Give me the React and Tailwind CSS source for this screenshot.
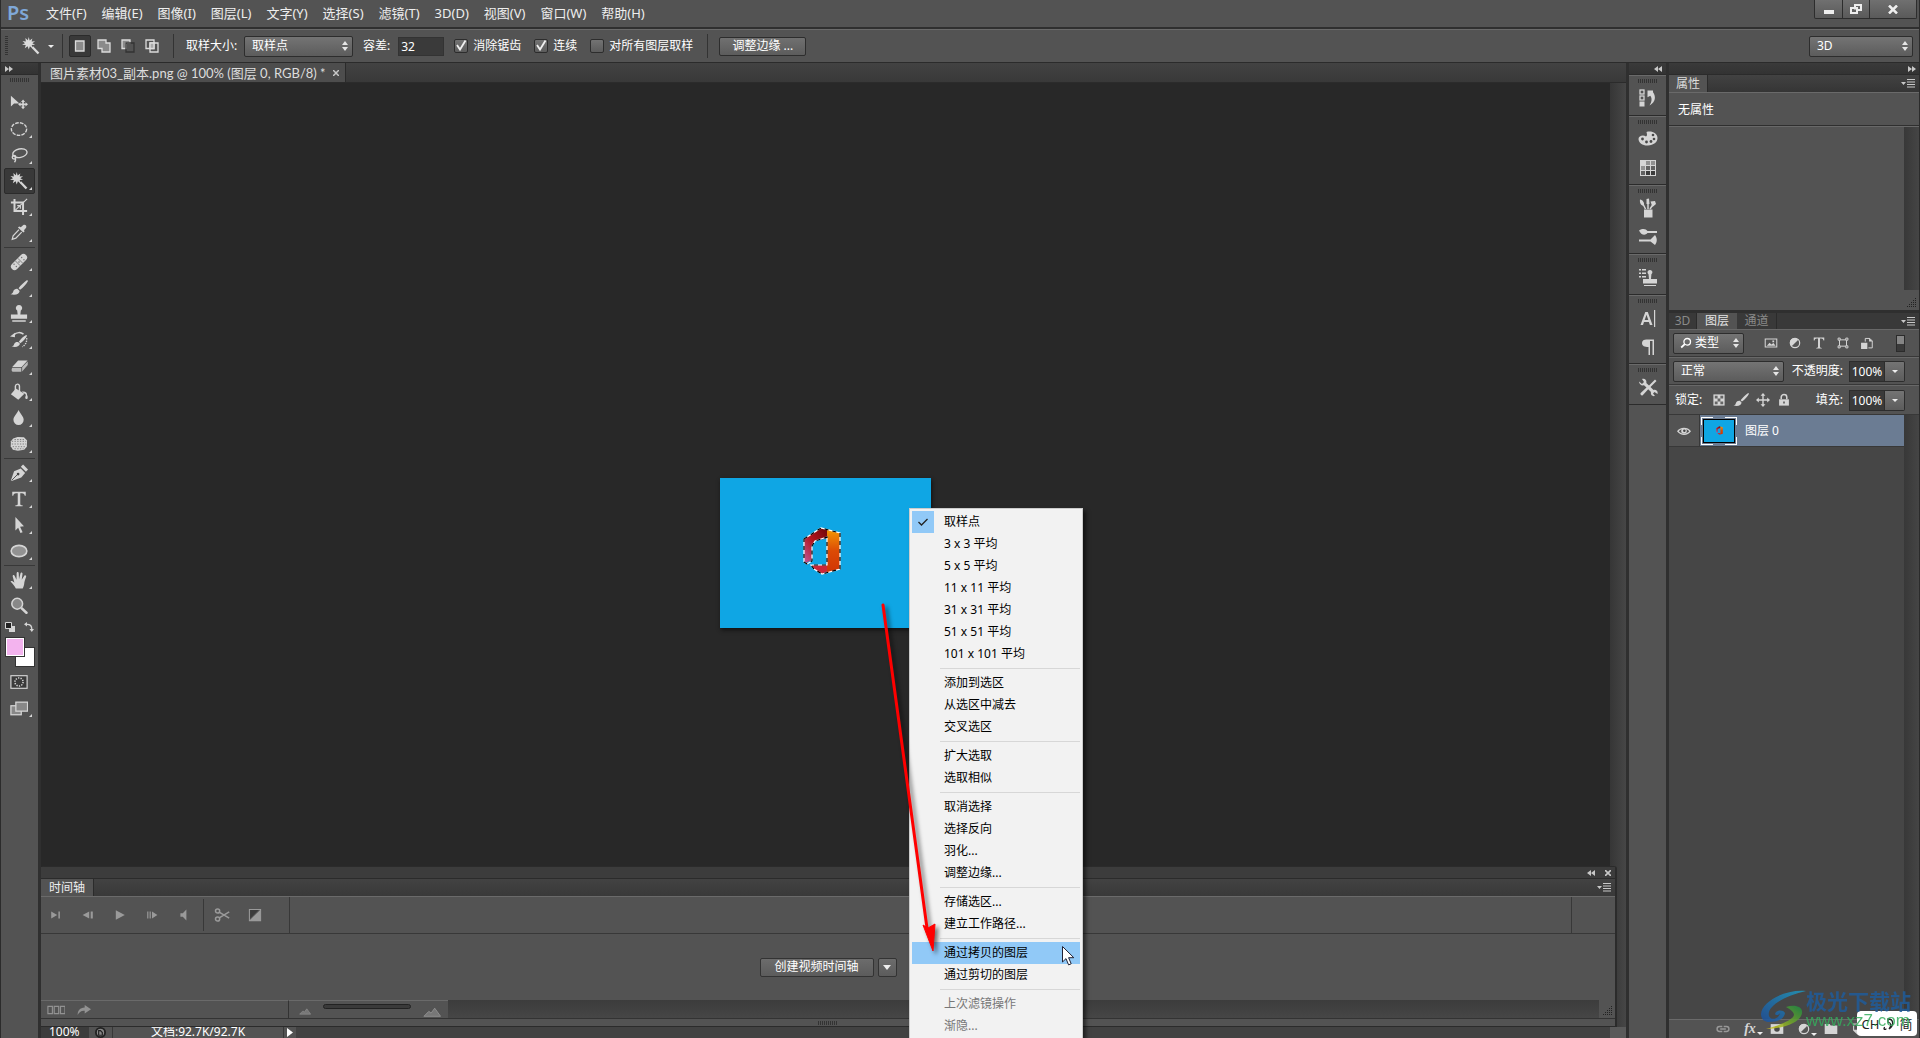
import clsx from "clsx";

const menus = ["文件(F)", "编辑(E)", "图像(I)", "图层(L)", "文字(Y)", "选择(S)", "滤镜(T)", "3D(D)", "视图(V)", "窗口(W)", "帮助(H)"];

const contextMenu = [
  [{ label: "取样点", checked: true }, { label: "3 x 3 平均" }, { label: "5 x 5 平均" }, { label: "11 x 11 平均" }, { label: "31 x 31 平均" }, { label: "51 x 51 平均" }, { label: "101 x 101 平均" }],
  [{ label: "添加到选区" }, { label: "从选区中减去" }, { label: "交叉选区" }],
  [{ label: "扩大选取" }, { label: "选取相似" }],
  [{ label: "取消选择" }, { label: "选择反向" }, { label: "羽化..." }, { label: "调整边缘..." }],
  [{ label: "存储选区..." }, { label: "建立工作路径..." }],
  [{ label: "通过拷贝的图层", active: true }, { label: "通过剪切的图层" }],
  [{ label: "上次滤镜操作", disabled: true }, { label: "渐隐...", disabled: true }],
];

// All 20x20 drawings, filled with the current text colour
const icons = {
  move: (
    <>
      <path d="M1 2v12l3.500-3.500h6z" />
      <path d="M14.500 6l2.300 2.800h-1.400V10.600h1.900V9.200L20 11.500l-2.700 2.300v-1.400h-1.900v1.900h1.400L14.500 17l-2.300-2.700h1.400v-1.900h-1.900v1.400L9 11.500l2.700-2.300v1.400h1.900V8.800h-1.400z" />
    </>
  ),
  ellipseMarquee: <ellipse cx="10" cy="10" rx="8.500" ry="7" fill="none" stroke="currentColor" strokeWidth="1.500" strokeDasharray="4 1.300" />,
  lasso: (
    <g fill="none" stroke="currentColor" strokeWidth="1.500">
      <ellipse cx="11" cy="8" rx="8" ry="4.800" transform="rotate(-12 11 8)" />
      <circle cx="4.500" cy="12.500" r="2" />
      <path d="M5.500 14c1 1 .8 2.500-.5 4" />
    </g>
  ),
  wand: (
    <>
      <path d="M7.500 0l1 4 3-2.300-.8 3.400 3.800-.3-3 2.200 3 1.700-3.700.3 1 3.700-3-2.300-1.300 3.600-1.200-3.600-3.200 2 1.100-3.500L0 8.600 3.300 7 .5 4.500l3.800.5L3.700 1l2.800 2.500z" />
      <path d="M10.500 12l1.800-1.700 7 7.200-1.900 1.700z" />
    </>
  ),
  crop: (
    <g fill="none" stroke="currentColor">
      <path d="M5 1v13.500h14M1 5h13.500v14" strokeWidth="2.200" />
      <path d="M6 13.500L19 1M8 8.500h3.500V12" strokeWidth="1.300" />
    </g>
  ),
  eyedropper: (
    <>
      <path d="M12 3.500l2.500-2.200c2.500-1.300 4.500.7 3.400 3L15.500 7l.8 1-1.500 1.500-6-5.500L10.200 2.800z" />
      <path d="M10 6.200L3.500 13 2.500 17l4-1.200L13 9" fill="none" stroke="currentColor" strokeWidth="1.400" />
    </>
  ),
  bandage: (
    <>
      <rect x="-1" y="6" width="22" height="8" rx="4" transform="rotate(-45 10 10)" />
      <path d="M5.800 8.600l5.600 5.600M8.600 5.800l5.600 5.600" stroke="#777" strokeWidth="1" />
      <g fill="#666">
        <circle cx="4.500" cy="12.500" r=".7" /><circle cx="7" cy="15" r=".7" /><circle cx="10" cy="10" r=".8" />
        <circle cx="13" cy="5" r=".7" /><circle cx="15.500" cy="7.500" r=".7" />
      </g>
    </>
  ),
  brush: <path d="M19 1.200l1 .9c-2 3.700-5.300 7.400-8.800 9.800L9.500 10.300C12.300 6.800 15.700 3.500 19 1.200zM8.500 11l2.200 2.200c-.3 3.300-4.200 5.200-10.200 3.700 2.200-.4 2.700-1.500 3.300-3.500.7-1.800 2.800-2.900 4.700-2.400z" />,
  stamp: <path d="M10 0a3.400 3.400 0 0 1 2 6.200L11.500 10.500H19v4.800H1v-4.800h7.500L8 6.200A3.400 3.400 0 0 1 10 0zM2.500 17h15v1.700h-15z" />,
  historyBrush: (
    <>
      <path d="M18 4.500l1 .9c-1.900 3.300-4.600 6.300-7.500 8.100l-1.700-1.600c2.200-3.100 5-5.800 8.200-7.400zM9 12.300l2.100 2c-.8 3-4.300 4.400-9.500 3 2-.4 2.400-1.400 3.100-2.900.8-1.900 2.600-2.500 4.300-2.100z" />
      <path d="M4 4.500C7.500 1 12 1.200 15 3.500" fill="none" stroke="currentColor" strokeWidth="1.700" />
      <path d="M18.500 8c.5 4-1.500 8-5 9.500" fill="none" stroke="currentColor" strokeWidth="1.500" strokeDasharray="1.500 1.200" />
      <path d="M0 6l5.500-4V7z" />
    </>
  ),
  eraser: (
    <>
      <path d="M9 4h10.500L13 11H2.500z" />
      <path d="M2.500 12h10v4.500H3c-1.300-.5-1.700-2.500-.5-4.500zM13.500 11.500L19.700 5v4L13.500 16z" opacity=".8" />
    </>
  ),
  bucket: (
    <>
      <path d="M6.500 6L16 12l-6.800 6.500L1 12.500z" />
      <path d="M6 9V3.500c.5-3 4.200-3 4.500 0v6" fill="none" stroke="currentColor" strokeWidth="1.600" />
      <path d="M13 9.500c4.500-.5 6 1 6 3.700.7 1.500.9 2.700.5 4-1 1-2.300.5-2.600-.5 0-1.500.4-2.500.8-3.500-.7-1.200-2.200-1.700-4.700-3.700z" />
    </>
  ),
  drop: <path d="M9.500 1c1.700 4 5.700 7 5.700 11a5.700 5.700 0 0 1-11.400 0C3.800 8 8 5 9.500 1z" />,
  sponge: (
    <>
      <path d="M3.500 4l5-1.700 7 .2L19 6l-.3 7-3 3.500-7 1-5.500-1.200L.8 12.500 1 7z" />
      <path d="M2 7h16M2 10h16M3 13h15M5 5h11M5 15.300h10" stroke="#777" strokeDasharray="1.500 1.500" />
    </>
  ),
  pen: (
    <>
      <path d="M12 5l3.500 3.500 1.300 1.500-4.300 5L1.800 19 1 18.200 4.500 8z" />
      <path d="M12 3l2.500-2.500L20 6l-2.300 2.700z" />
      <path d="M1.800 18.200L8 12" stroke="#444" />
      <circle cx="9" cy="11.200" r="1.500" fill="#444" />
    </>
  ),
  type: <path d="M2.500 2h15v4.500h-1.100c-.4-2-1-3-3.200-3h-1.800V15.500c0 1.100.5 1.300 2.600 1.500v1H6V17c2.100-.2 2.600-.4 2.600-1.500v-12H6.800c-2.200 0-2.800 1-3.200 3H2.500z" />,
  arrow: <path d="M6 1l9.500 10.500-4.300.5 2.800 6-2.400 1-2.500-6L6 16z" />,
  ellipse: <ellipse cx="10" cy="10" rx="8.700" ry="6.300" fill="#929292" stroke="currentColor" strokeWidth="1.800" />,
  hand: <path d="M6.500 19.500c-1.500-3-3.700-5.300-6-7.700.9-1.500 2.600-.7 4.400 1.200L3 6c-.2-1.700 1.700-2 2.200-.5l2 4.300L7.400 2.500c.1-1.700 2.200-1.700 2.300 0L10 9.200l1.700-6.700c.5-1.500 2.500-.8 2.200.7L13 9.800l2.900-4.600c.9-1.300 2.600-.2 2 1.200-1.100 3-1.900 5.400-2.200 8.200-.3 2.200-1.100 3.300-1.600 4.900z" />,
  zoom: (
    <>
      <circle cx="8" cy="7.500" r="6" fill="#888" stroke="currentColor" strokeWidth="1.700" />
      <path d="M11.500 13l2-2 6 5.700c.9 1.300-1 3-2.200 2z" />
    </>
  ),
  quickMask: (
    <>
      <rect x="1" y="3" width="18" height="14" fill="#3a3a3a" stroke="currentColor" strokeWidth="1.300" />
      <circle cx="10" cy="10" r="4.500" fill="none" stroke="currentColor" strokeWidth="1.700" strokeDasharray="1.400 1.400" />
    </>
  ),
  screenMode: (
    <g fill="#888" stroke="currentColor" strokeWidth="1.400">
      <rect x="1" y="7.500" width="11.500" height="10" />
      <rect x="6.500" y="3.500" width="13" height="10" />
    </g>
  ),
  historyPanel: (
    <>
      <g fill="none" stroke="currentColor" strokeWidth="1.300"><rect x="2" y="2" width="4" height="4" /><rect x="2" y="8" width="4" height="4" /></g>
      <rect x="1.500" y="13.500" width="5" height="5" />
      <path d="M9.500 2.500h5.500v1.700c3 4 3 9.500-3.500 13.300 2.500-4 2.700-7.500.8-9.800L9.500 9.300z" />
    </>
  ),
  palette: (
    <>
      <path d="M8.500 3c5-1.500 11 1 11 6 0 4.500-4 7-9.500 7.500-5 .3-9.500-2.500-9.500-6.500C.5 7 5 5.500 8 7.500 9.500 7 9 5 8.500 3z" />
      <g fill="#484848"><circle cx="4.500" cy="10" r="1.400" /><circle cx="8.500" cy="13" r="1.400" /><circle cx="13" cy="12.500" r="1.400" /><circle cx="16" cy="10" r="1.300" /><circle cx="15" cy="6" r="1.300" /></g>
    </>
  ),
  swatches: (
    <>
      <rect x="2" y="2" width="16" height="16" />
      <g fill="#919191"><rect x="8" y="3" width="4" height="4" /><rect x="13" y="3" width="4" height="4" /><rect x="3" y="8" width="4" height="4" /></g>
      <g fill="#616161"><rect x="8" y="8" width="4" height="4" /><rect x="13" y="8" width="4" height="4" /><rect x="3" y="13" width="4" height="4" /></g>
      <g fill="#3c3c3c"><rect x="8" y="13" width="4" height="4" /><rect x="13" y="13" width="4" height="4" /></g>
    </>
  ),
  brushPresets: (
    <>
      <path d="M6 11.500h8.500v8H6z" />
      <path d="M7.500 11L4 4M10 11V4M12 11l4-6" stroke="currentColor" strokeWidth="1.500" />
      <path d="M2 1.500c3 .5 4.500 3 4 6.500C3 7.500 1.500 5 2 1.500zM8.500 1L11 .5 11.500 6h-3zM12.500 3.500l4.500-.5 1 3-3.500 3z" />
    </>
  ),
  brushPanel: (
    <>
      <path d="M1 3.500c4-2.500 7-1.500 8.500.5H19v2H9.500C7 9 3 8 1 3.500z" />
      <path d="M1 12.500h11.500l4.500-4.500c2.300 3 2.500 7 0 10l-4.500-3.500H1z" />
    </>
  ),
  cloneSource: (
    <>
      <path d="M1 2h2v1.500H1zM4 2h4v1.500H4zM1 5.500h2V7H1zM4 5.500h4V7H4zM1 9h2v1.500H1zM4 9h4v1.500H4z" />
      <path d="M12 3a2.300 2.300 0 0 1 1.400 4.200L13 12h6v4.500H5V12h6l-.5-4.800A2.300 2.300 0 0 1 12 3zM6 18h12v1H6z" />
    </>
  ),
  character: <path d="M2.500 17L7.300 4h2.500l4.700 13h-2.600l-1-3H6l-1 3zm4.200-5h3.600L8.500 6.700zM16 2h1.200v17H16z" />,
  paragraph: <path d="M4 6c0-2.500 2-3.500 4.500-3.500H16V18h-1.500V4H12v14h-1.500v-8C6.500 10 4 9 4 6z" />,
  toolPresets: (
    <path d="M1 4.500l3 2.500 2-2L4 2c3-1 5 1.200 4.300 4L11 8.500l6-6 1.500 1.500-6 6 3 3c3-.7 4.700 1.500 4 4l-3-2-1.500 1.500L17 19c-3 .8-4.700-1.500-4-4l-2.800-2.800-5.500 6c-1.500.8-3-1-2-2.300L8.500 10.500 6 8.300C3.500 9 1 7 1 4.500z" />
  ),
  picture: (
    <>
      <path d="M1 3.500h18v13H1zM2.500 5v10h15V5z" fillRule="evenodd" />
      <path d="M4 14l4-4.500 2.500 2.500 3-2 3 4zM12 6.500h2.500V9H12z" />
    </>
  ),
  halfCircle: (
    <>
      <circle cx="10" cy="10" r="6.700" fill="#555" stroke="currentColor" strokeWidth="1.700" />
      <path d="M14.700 5.300A6.700 6.700 0 1 0 5.300 14.700z" />
    </>
  ),
  shape: (
    <g fill="none" stroke="currentColor" strokeWidth="1.400">
      <path d="M5 5.500h10v9H5z" />
      <path d="M3 3h3v3H3zM14 3h3v3h-3zM3 14h3v3H3zM14 14h3v3h-3z" fill="#555" />
    </g>
  ),
  smartObject: (
    <>
      <path d="M7.500 8V3.500h6.500L17.500 7v10H12" fill="none" stroke="currentColor" strokeWidth="1.400" />
      <path d="M13 3v5h5zM1.500 9.500h9v9h-9z" />
    </>
  ),
  checker: (
    <>
      <path d="M2 2h16v16H2z" />
      <path d="M4 4h4v4H4zM12 4h4v4h-4zM8 8h4v4H8zM4 12h4v4H4zM12 12h4v4h-4z" fill="#666" />
    </>
  ),
  fourWay: <path d="M10 0l3.500 4H11v5h5V6.500l4 3.500-4 3.500V11h-5v5h2.500L10 20l-3.500-4H9v-5H4v2.500L0 10l4-3.500V9h5V4H6.500z" />,
  lock: (
    <>
      <path d="M3 9h14v9H3z" />
      <path d="M6 9V6c0-5 8-5 8 0v3" fill="none" stroke="currentColor" strokeWidth="2.200" />
      <path d="M9 12h2v3H9z" fill="#444" />
    </>
  ),
  eye: (
    <>
      <path d="M0 10.500C4 4 15.500 3.500 20 10.500 15.500 17.500 5 17.500 0 10.500zm2.500 0c3.500 4.500 11.500 4.500 15 0-3.500-4.500-11.500-4.500-15 0z" fillRule="evenodd" />
      <circle cx="10" cy="10" r="4" /><circle cx="10.500" cy="9.500" r="1.800" fill="#444" />
    </>
  ),
  search: (
    <g fill="none" stroke="currentColor" strokeWidth="2.200">
      <circle cx="12" cy="8" r="5.500" />
      <path d="M8 12l-6 5.500" strokeWidth="3" />
    </g>
  ),
  toEnd: <path d="M2 4l10 6-10 6zM14 4h2.500v12H14z" />,
  stepBack: <path d="M12 4L1 10l11 6zM14.500 4H18v12h-3.500z" />,
  play: <path d="M3 2l15 8-15 8z" />,
  stepForward: <path d="M2 4h2v12H2zM6 4h2v12H6zM10 4l9 6-9 6z" />,
  speaker: <path d="M4 7h4l6-6v18l-6-6H4z" />,
  scissors: (
    <g fill="none" stroke="currentColor" strokeWidth="1.900">
      <circle cx="4.500" cy="5" r="2.600" /><circle cx="4.500" cy="15" r="2.600" />
      <path d="M6.500 6.500L19 14M6.500 13.500L19 6" />
    </g>
  ),
  transition: (
    <>
      <path d="M2 2h16v16H2z" fill="none" stroke="currentColor" strokeWidth="1.500" />
      <path d="M18 2v16H2z" /><path d="M3 3h12L3 15z" fill="#3c3c3c" />
    </>
  ),
  frames: <path d="M1 6h5v8H1zM8 6h5v8H8zM15 6h5v8h-5z" fill="none" stroke="currentColor" strokeWidth="1.300" />,
  share: <path d="M11 3l9 6-9 6v-4c-5-.5-8 2-10 6C1 11 4 7 11 6.500z" />,
  mountains: <path d="M1 17l5.500-5.500L9 13.500 13 8l6.500 9z" fill="#777" stroke="currentColor" />,
  chain: (
    <g fill="none" stroke="currentColor" strokeWidth="2">
      <path d="M9 6.500H5a3.500 3.500 0 0 0 0 7h4M11 6.500h4a3.500 3.500 0 0 1 0 7h-4M6 10h8" />
    </g>
  ),
  mask: (
    <>
      <path d="M1 3h18v14H1z" /><circle cx="10" cy="10" r="4" fill="#4a4a4a" />
    </>
  ),
  folder: <path d="M1 3h7l1.500 2H19v12H1z" />,
  newLayer: <path d="M3 2h14v16H9l-6-6zM4.500 3.500V11H10v5.500h5.500v-13z" fillRule="evenodd" />,
};

function Icon({ name, className = "size-5" }) {
  return (
    <svg viewBox="0 0 20 20" fill="currentColor" aria-hidden="true" className={clsx("shrink-0", className)}>
      {icons[name]}
    </svg>
  );
}

function DoubleArrow({ left }) {
  return (
    <svg viewBox="0 0 8 6" fill="#c8c8c8" aria-hidden="true" className={clsx("w-2 h-1.5", left && "rotate-180")}>
      <path d="M0 0l4 3-4 3zM4 0l4 3-4 3z" />
    </svg>
  );
}

function PanelMenu() {
  return (
    <button aria-label="面板菜单" className="flex items-center">
      <svg viewBox="0 0 14 9" fill="#c8c8c8" className="w-3.5 h-[9px]">
        <path d="M0 3h5L2.500 6zM6 0h8v1H6zM6 2.500h8v1H6zM6 5h8v1H6zM6 7.500h8v1H6z" />
      </svg>
    </button>
  );
}

function Grip() {
  return <div className="w-5 h-1 bg-[repeating-linear-gradient(90deg,#333_0_1px,#535353_1px_2px)]" />;
}

function ResizeCorner() {
  return (
    <svg viewBox="0 0 10 10" fill="#222" aria-hidden="true" className="size-2.5">
      <path d="M8 0h1v1H8zM6 2h1v1H6zM8 2h1v1H8zM4 4h1v1H4zM6 4h1v1H6zM8 4h1v1H8zM2 6h1v1H2zM4 6h1v1H4zM6 6h1v1H6zM8 6h1v1H8zM0 8h1v1H0zM2 8h1v1H2zM4 8h1v1H4zM6 8h1v1H6zM8 8h1v1H8z" />
    </svg>
  );
}

function Caret({ className }) {
  return <svg viewBox="0 0 6 3" fill="#eee" aria-hidden="true" className={clsx("w-1.5 h-[3px]", className)}><path d="M0 0h6L3 3z" /></svg>;
}

function Select({ label, value, className, icon }) {
  return (
    <div className={clsx("relative flex items-center h-[21px] rounded-[2px] border border-[#2d2d2d] bg-linear-to-b from-[#747474] to-[#5c5c5c] text-white", className)}>
      {icon && <Icon name={icon} className="absolute left-1.5 size-3" />}
      <select aria-label={label} className={clsx("appearance-none w-full h-full outline-none leading-4", icon ? "pl-[21px]" : "pl-[7px]")}>
        <option>{value}</option>
      </select>
      <svg viewBox="0 0 6 10" fill="#e6e6e6" aria-hidden="true" className="absolute right-1 w-1.5 h-2.5 pointer-events-none">
        <path d="M0 4l3-4 3 4zM0 6l3 4 3-4z" />
      </svg>
    </div>
  );
}

function Checkbox({ label, checked }) {
  return (
    <label className="flex items-center gap-[5px]">
      <span className="relative size-3.5">
        <input type="checkbox" defaultChecked={checked} className="appearance-none block size-3.5 rounded-[2px] border border-[#2d2d2d] bg-linear-to-b from-[#737373] to-[#5c5c5c]" />
        {checked && (
          <svg viewBox="0 0 14 14" fill="none" stroke="#f0f0f0" strokeWidth="1.800" className="absolute inset-0 size-3.5 pointer-events-none">
            <path d="M3 6l3 4.500L11.500 1.500" />
          </svg>
        )}
      </span>
      {label}
    </label>
  );
}

function PercentField({ label, id }) {
  return (
    <div className="flex items-center">
      <label htmlFor={id} className="pr-1.5">{label}</label>
      <input id={id} defaultValue="100%" className="w-9 h-[21px] border border-[#2d2d2d] bg-[#3a3a3a] text-center text-white outline-none" />
      <button aria-label={label + "选项"} className="flex items-center justify-center w-5 h-[21px] border border-l-0 border-[#2d2d2d] rounded-r-[2px] bg-linear-to-b from-[#747474] to-[#5c5c5c]">
        <Caret />
      </button>
    </div>
  );
}

function MenuBar() {
  return (
    <header className="flex h-[29px] border-b-2 border-[#2f2f2f]">
      <div className="pl-1.5 w-[45px] text-[20px] leading-[26px] font-semibold text-[#7fa8d8]">Ps</div>
      <nav className="flex gap-[15px] text-[13px] leading-[27px] text-[#eee]">
        {menus.map((m) => (
          <button key={m}>{m}</button>
        ))}
      </nav>
      <div className="ml-auto mr-0.5 flex h-[19px] rounded-b-[2px] border border-t-0 border-[#2d2d2d] divide-x divide-[#2d2d2d] bg-linear-to-b from-[#707070] to-[#5a5a5a] text-[#eee]">
        <button aria-label="最小化" className="w-7 flex justify-center items-center"><span className="mt-1.5 w-2.5 h-1 bg-current" /></button>
        <button aria-label="还原" className="w-[27px] flex justify-center items-center">
          <svg viewBox="0 0 12 10" fill="none" stroke="currentColor" strokeWidth="2" className="w-3 h-2.5"><path d="M5 5.500V1h6v5H8M1 4h6v5H1z" /></svg>
        </button>
        <button aria-label="关闭" className="w-[46px] flex justify-center items-center">
          <svg viewBox="0 0 10 9" fill="none" stroke="currentColor" strokeWidth="2.500" className="w-2.5 h-[9px]"><path d="M1 0.500l8 8M9 .5l-8 8" /></svg>
        </button>
      </div>
    </header>
  );
}

function SelectionMode({ kind }) {
  return (
    <svg viewBox="0 0 14 14" fill="none" stroke="currentColor" strokeWidth="1.300" className="size-3.5">
      {kind === "new" && <path d="M2.500 2h8.500v10H2.500z" fill="#8a8a8a" />}
      {kind === "add" && <path d="M1 1h8v3h4v9H5V9.500H1z" fill="#8a8a8a" />}
      {kind === "subtract" && <><path d="M1 9.500V1h8v3H5v5.500z" fill="#8a8a8a" /><path d="M5 4h8v9H5z" stroke="#333" /></>}
      {kind === "intersect" && <><path d="M1 1h8v8.500H1zM5 4h8v9H5z" /><path d="M5 4h4v5.500H5z" fill="#aaa" /></>}
    </svg>
  );
}

function OptionsBar() {
  return (
    <div className="flex items-center h-[33px] border-t border-[#6a6a6a] px-1 text-white">
      <div className="w-[3px] h-5 bg-[repeating-linear-gradient(#333_0_1px,#535353_1px_2px)]" />
      <button aria-label="魔棒工具" className="flex items-center gap-2 ml-3.5 text-[#dcdcdc]">
        <Icon name="wand" className="size-[18px]" />
        <Caret />
      </button>
      <div className="ml-2 w-px h-6 bg-[#333]" />
      <div className="flex items-center ml-1.5 gap-2.5 text-[#dcdcdc]">
        <button aria-label="新选区" className="flex items-center justify-center -mr-1 size-[22px] rounded-[2px] border border-[#2b2b2b] bg-[#393939]"><SelectionMode kind="new" /></button>
        <button aria-label="添加到选区"><SelectionMode kind="add" /></button>
        <button aria-label="从选区减去"><SelectionMode kind="subtract" /></button>
        <button aria-label="与选区交叉"><SelectionMode kind="intersect" /></button>
      </div>
      <div className="ml-3.5 w-px h-6 bg-[#333]" />
      <span className="w-[70px] pl-3">取样大小:</span>
      <Select label="取样大小" value="取样点" className="w-[109px]" />
      <label htmlFor="tolerance" className="ml-2.5 mr-2">容差:</label>
      <input id="tolerance" defaultValue="32" className="w-[46px] h-[19px] px-0.5 border border-[#333] bg-[#3a3a3a] outline-none" />
      <div className="flex items-center gap-[13px] ml-2.5">
        <Checkbox label="消除锯齿" checked />
        <Checkbox label="连续" checked />
        <Checkbox label="对所有图层取样" />
      </div>
      <div className="ml-3.5 w-px h-6 bg-[#333]" />
      <button className="ml-[11px] w-[87px] h-[19px] rounded-[2px] border border-[#2d2d2d] bg-linear-to-b from-[#707070] to-[#5c5c5c] leading-4">调整边缘 ...</button>
      <Select label="工作区" value="3D" className="ml-auto mr-0.5 w-[104px]" />
    </div>
  );
}

const toolGroups = [
  [["move", "移动"], ["ellipseMarquee", "椭圆选框"], ["lasso", "套索"], ["wand", "魔棒"], ["crop", "裁剪"], ["eyedropper", "吸管"]],
  [["bandage", "修复画笔"], ["brush", "画笔"], ["stamp", "仿制图章"], ["historyBrush", "历史记录画笔"], ["eraser", "橡皮擦"], ["bucket", "油漆桶"], ["drop", "模糊"], ["sponge", "海绵"]],
  [["pen", "钢笔"], ["type", "文字"], ["arrow", "路径选择"], ["ellipse", "椭圆"]],
  [["hand", "抓手"], ["zoom", "缩放"]],
];

function ToolButton({ name, label }) {
  return (
    <button
      aria-label={label}
      className={clsx(
        "relative flex items-center w-[31px] h-[26px] border rounded-[2px] pl-[5px]",
        name === "wand" ? "border-[#2b2b2b] bg-[#393939]" : "border-transparent"
      )}
    >
      <Icon name={name} className="size-[18px]" />
      {name !== "move" && name !== "zoom" && name !== "quickMask" && (
        <span className="absolute right-0.5 bottom-[3px] size-[3px] bg-[#d8d8d8] [clip-path:polygon(100%_0,100%_100%,0_100%)]" />
      )}
    </button>
  );
}

function Toolbar() {
  return (
    <aside className="w-10 shrink-0 border-r-[3px] border-[#2f2f2f] text-[#d5d5d5]">
      <div className="h-3 flex items-center pl-1 border-b border-[#2b2b2b] bg-linear-to-b from-[#3a3a3a] to-[#333]"><DoubleArrow /></div>
      <div className="flex justify-center pt-[3px] h-[15px]"><Grip /></div>
      <div className="flex flex-col items-center">
        {toolGroups.map((group, i) => (
          <div key={i} className="flex flex-col">
            {i > 0 && <div className="my-px h-px bg-[#383838]" />}
            {group.map(([name, label]) => (
              <ToolButton key={name} name={name} label={label} />
            ))}
          </div>
        ))}
        <div className="flex items-center justify-between w-[29px] h-[15px]">
          <svg viewBox="0 0 10 10" className="size-2.5"><path d="M4 4h6v6H4z" fill="#d5d5d5" /><path d="M.5.5h6v6h-6z" fill="#222" stroke="#d5d5d5" /></svg>
          <svg viewBox="0 0 10 10" className="size-2.5" fill="#d5d5d5"><path d="M3 0v4.500L0 2.300zM7.800 10L5.500 7H10z" /><path d="M3 2.300c3.500 0 4.800 1.500 4.800 5" fill="none" stroke="#d5d5d5" strokeWidth="1.300" /></svg>
        </div>
        <div className="relative mt-[3px] mb-0.5 size-[30px]">
          <button aria-label="背景色" className="absolute right-0 bottom-0 size-5 border border-[#333] bg-white" />
          <button aria-label="前景色" className="absolute left-0 top-0 size-5 border border-[#333] bg-[#f3b3ee] shadow-[inset_0_0_0_1px_#fff]" />
        </div>
        <ToolButton name="quickMask" label="快速蒙版" />
        <ToolButton name="screenMode" label="屏幕模式" />
      </div>
    </aside>
  );
}

function OfficeLogo({ className, selection }) {
  return (
    <svg viewBox="0 0 38 48" className={className} aria-hidden="true">
      <defs>
        <linearGradient id="officeLeft" x1="1" y1="0" x2="0" y2="1">
          <stop offset="0" stopColor="#6b0709" /><stop offset=".5" stopColor="#b3141d" /><stop offset="1" stopColor="#c05a9c" />
        </linearGradient>
        <linearGradient id="officeRight" x1="0" y1="0" x2="0" y2="1">
          <stop offset="0" stopColor="#f59a05" /><stop offset=".5" stopColor="#dc4a05" /><stop offset="1" stopColor="#d03505" />
        </linearGradient>
      </defs>
      <path d="M1 12L18 1l7 2v8l-13 3-3 5v14l-6 3-2-2z" fill="url(#officeLeft)" />
      <path d="M8 38h17v6l-6 3-8-5z" fill="#cb2738" />
      <path d="M24 2l13 4v36l-13 4z" fill="url(#officeRight)" />
      {selection && (
        <g fill="none" strokeWidth="1.200">
          <path d="M1 12L18 1l19 5v36l-18 5-8-5-3-4h16V10l-12 4-3 5v15l-5 3-3-2z" stroke="#fff" />
          <path d="M1 12L18 1l19 5v36l-18 5-8-5-3-4h16V10l-12 4-3 5v15l-5 3-3-2z" stroke="#000" strokeDasharray="4 4" />
        </g>
      )}
    </svg>
  );
}

function Timeline() {
  return (
    <section className="z-10 self-end flex flex-col mr-[9px] h-[161px] rounded-t-[3px] border-y border-r-2 border-[#2b2b2b] bg-[#535353] text-[#eee]">
      <div className="flex items-center justify-end gap-2.5 h-3 pr-1 shrink-0 bg-[#3c3c3c] border-b border-[#2b2b2b]">
        <DoubleArrow left />
        <button aria-label="关闭时间轴">
          <svg viewBox="0 0 6 6" fill="none" stroke="#c8c8c8" strokeWidth="1.600" className="block size-1.5"><path d="M0 0l6 6M6 0L0 6" /></svg>
        </button>
      </div>
      <div className="flex items-center justify-between h-[17px] shrink-0 pr-1 bg-linear-to-b from-[#424242] to-[#393939]">
        <h2 className="h-full px-2 leading-[18px] bg-[#535353] border-r border-[#2b2b2b]">时间轴</h2>
        <PanelMenu />
      </div>
      <div className="flex items-center h-[38px] shrink-0 border-t border-t-[#6a6a6a] border-b border-b-[#383838] text-[#9a9a9a]">
        <div className="flex items-center gap-5 pl-[9px] w-[163px] h-8 border-r border-[#383838]">
          <button aria-label="转到第一帧"><Icon name="toEnd" className="size-3" /></button>
          <button aria-label="上一帧"><Icon name="stepBack" className="size-3" /></button>
          <button aria-label="播放"><Icon name="play" className="size-3" /></button>
          <button aria-label="下一帧"><Icon name="stepForward" className="size-3" /></button>
          <button aria-label="静音"><Icon name="speaker" className="size-3" /></button>
        </div>
        <div className="flex items-center gap-[18px] pl-2.5 w-[86px] h-full border-r border-[#383838]">
          <button aria-label="拆分"><Icon name="scissors" className="size-4" /></button>
          <button aria-label="过渡"><Icon name="transition" className="size-3.5" /></button>
        </div>
        <div className="flex-1 h-full" />
        <div className="w-11 h-full border-l border-[#383838]" />
      </div>
      <div className="flex-1 flex items-center justify-center gap-1">
        <button className="w-[114px] h-[19px] rounded-[2px] border border-[#333] bg-linear-to-b from-[#6c6c6c] to-[#5c5c5c] leading-4 text-white">创建视频时间轴</button>
        <button aria-label="时间轴选项" className="flex items-center justify-center w-[19px] h-[19px] rounded-[2px] border border-[#333] bg-linear-to-b from-[#6c6c6c] to-[#5c5c5c]">
          <svg viewBox="0 0 8 5" fill="#eee" className="w-2 h-[5px]"><path d="M0 0h8L4 5z" /></svg>
        </button>
      </div>
      <div className="flex h-[18px] shrink-0 text-[#929292]">
        <div className="flex items-center gap-3 pl-1.5 w-[248px] border-t border-t-[#6a6a6a] border-r border-r-[#333]">
          <Icon name="frames" className="size-[18px]" />
          <Icon name="share" className="size-3.5" />
        </div>
        <div className="flex items-center justify-between pl-2.5 pr-[7px] w-[159px] border-t border-[#6a6a6a]">
          <Icon name="mountains" className="size-3" />
          <div className="w-[88px] h-[5px] mb-1.5 rounded-full border border-[#222] bg-[#3a3a3a]" />
          <Icon name="mountains" className="size-[18px]" />
        </div>
        <div className="flex-1 bg-linear-to-b from-[#3c3c3c] to-[#464646]" />
        <div className="flex items-end justify-end w-4 p-0.5"><ResizeCorner /></div>
      </div>
      <div className="flex items-center justify-center h-2 shrink-0 border-t border-[#333]">
        <Grip />
      </div>
    </section>
  );
}

function DocumentArea() {
  return (
    <main className="flex-1 min-w-0 flex flex-col border-r-[3px] border-[#2f2f2f]">
      <div className="flex h-5 shrink-0 border-b border-[#2b2b2b] bg-linear-to-b from-[#424242] to-[#393939]">
        <div className="flex items-center gap-[7px] pl-[9px] pr-1.5 border-r border-[#2b2b2b] bg-[#4d4d4d] text-[13px] leading-[18px] text-[#ddd] whitespace-nowrap font-['Lato','Noto_Sans_CJK_SC',sans-serif]">
          图片素材03_副本.png @ 100% (图层 0, RGB/8) *
          <button aria-label="关闭文档">
            <svg viewBox="0 0 6 6" fill="none" stroke="#c8c8c8" strokeWidth="1.500" className="block size-1.5"><path d="M0 0l6 6M6 0L0 6" /></svg>
          </button>
        </div>
      </div>
      <div className="flex-1 min-h-0 grid *:[grid-area:1/1]">
        <div className="flex bg-[#282828]">
          <div className="flex-1 flex items-center justify-center pb-1">
            <div className="flex items-center justify-center w-[211px] h-[150px] pr-2 pb-1 bg-[#0fa6e4] shadow-[1px_2px_4px_#111]">
              <OfficeLogo selection className="w-[38px] h-12" />
            </div>
          </div>
          <div className="w-4 bg-linear-to-r from-[#363636] to-[#464646]" />
        </div>
        <Timeline />
      </div>
      <footer className="flex h-[11px] shrink-0 leading-[10px] text-white bg-[#424242]">
        <div className="w-12 pl-2 bg-[#3c3c3c]">100%</div>
        <div className="flex items-center justify-center w-6 bg-[#535353] border-r border-[#383838]">
          <svg viewBox="0 0 12 12" fill="none" stroke="#222" strokeWidth="2" className="size-[11px]"><circle cx="6" cy="6" r="5" fill="#888" /><path d="M4 9V4h2l2 2v3z" strokeWidth="1.300" /></svg>
        </div>
        <div className="w-[171px] text-center bg-[#535353] border-r border-[#383838]">文档:92.7K/92.7K</div>
        <div className="flex items-center pl-[3px] w-3 bg-[#535353]">
          <svg viewBox="0 0 6 9" fill="#fff" className="w-1.5 h-[9px]"><path d="M0 0l6 4.500L0 9z" /></svg>
        </div>
        <div className="ml-auto w-4 bg-[#5a5a5a]" />
      </footer>
    </main>
  );
}

const dockGroups = [
  [["historyPanel", "历史记录"]],
  [["palette", "颜色"], ["swatches", "色板"]],
  [["brushPresets", "画笔预设"], ["brushPanel", "画笔"]],
  [["cloneSource", "仿制源"]],
  [["character", "字符"], ["paragraph", "段落"]],
  [["toolPresets", "工具预设"]],
];

function IconDock() {
  return (
    <aside className="w-10 shrink-0 border-r-[3px] border-[#2f2f2f] text-[#d5d5d5]">
      <div className="h-3 flex items-center justify-end pr-1 border-b border-[#2b2b2b] bg-linear-to-b from-[#3a3a3a] to-[#333]"><DoubleArrow left /></div>
      {dockGroups.map((group, i) => (
        <div key={i} className={clsx("flex flex-col items-center pt-[3px] border-t border-t-[#6a6a6a] border-b border-b-[#2b2b2b]", group.length > 1 ? "pb-0.5" : "pb-[3px]")}>
          <Grip />
          {group.map(([name, label]) => (
            <button key={name} aria-label={label} className="flex items-center h-[29px]"><Icon name={name} /></button>
          ))}
        </div>
      ))}
    </aside>
  );
}

function Panels() {
  return (
    <aside className="w-[250px] shrink-0 flex flex-col text-white">
      <div className="h-3 shrink-0 flex items-center justify-end pr-[3px] border-b border-[#2b2b2b] bg-linear-to-b from-[#3a3a3a] to-[#333]"><DoubleArrow /></div>

      <section className="shrink-0">
        <div className="flex items-center justify-between h-[17px] pr-1 bg-linear-to-b from-[#424242] to-[#353535]">
          <h2 className="h-full px-[7px] leading-[18px] bg-[#535353] border-r border-[#2b2b2b] text-[#ddd]">属性</h2>
          <PanelMenu />
        </div>
        <div className="h-[34px] pl-[9px] border-t border-t-[#6a6a6a] border-b border-b-[#2f2f2f] leading-[33px]">无属性</div>
        <div className="flex h-[164px] border-t border-[#686868]">
          <div className="flex-1" />
          <div className="w-[15px] bg-linear-to-r from-[#383838] to-[#454545]" />
        </div>
        <div className="flex items-end justify-end h-5 p-0.5"><ResizeCorner /></div>
      </section>

      <section className="flex-1 min-h-0 flex flex-col border-t-[3px] border-[#2f2f2f]">
        <div className="flex items-center h-4 shrink-0 pr-1 bg-[#393939] leading-4 text-[#8a8a8a]">
          <button className="w-7 border-r border-[#2b2b2b]">3D</button>
          <button className="w-10 bg-[#535353] text-[#e5e5e5]">图层</button>
          <button className="w-10 border-r border-[#2b2b2b]">通道</button>
          <div className="ml-auto flex"><PanelMenu /></div>
        </div>
        <div className="flex items-center h-7 shrink-0 px-1 border-t border-t-[#686868] border-b border-b-[#383838] text-[#d5d5d5]">
          <Select label="图层过滤" value="类型" icon="search" className="w-[71px]" />
          <div className="flex items-center gap-[10px] ml-5">
            {["picture", "halfCircle", "type", "shape", "smartObject"].map((name) => (
              <button key={name} aria-label={name}><Icon name={name} className="size-3.5" /></button>
            ))}
          </div>
          <button aria-label="过滤开关" className="ml-auto mr-2.5 w-[9px] h-[17px] border border-[#2b2b2b] bg-[#3a3a3a]"><span className="block mb-[7px] h-2 bg-[#858585]" /></button>
        </div>
        <div className="flex items-center justify-between h-7 shrink-0 pl-1 pr-3.5 border-t border-t-[#686868] border-b border-b-[#383838]">
          <Select label="混合模式" value="正常" className="w-[111px]" />
          <PercentField id="opacity" label="不透明度:" />
        </div>
        <div className="flex items-center justify-between h-[30px] shrink-0 pl-1.5 pr-3.5 border-t border-t-[#686868] border-b border-b-[#383838]">
          <div className="flex items-center text-[#d5d5d5]">
            <span className="text-white pr-2.5">锁定:</span>
            <div className="flex items-center gap-[7px]">
              <button aria-label="锁定透明像素"><Icon name="checker" className="size-3.5" /></button>
              <button aria-label="锁定图像像素"><Icon name="brush" className="size-4" /></button>
              <button aria-label="锁定位置"><Icon name="fourWay" className="size-3.5" /></button>
              <button aria-label="锁定全部"><Icon name="lock" className="size-3.5" /></button>
            </div>
          </div>
          <PercentField id="fill" label="填充:" />
        </div>
        <div className="flex flex-1 min-h-0">
          <div className="flex-1 bg-[#464646]">
            <div className="flex h-8 bg-[#535353] border-b border-[#383838]">
              <button aria-label="可见性" className="flex items-center justify-center w-[31px] border-r border-[#383838] text-[#d5d5d5]"><Icon name="eye" className="size-3.5" /></button>
              <div className="flex-1 flex items-center gap-2 pl-px bg-[#6b7c93]">
                <div className="relative flex items-center justify-center w-9 h-7 border border-white">
                  <div className="absolute -inset-x-px inset-y-[7px] bg-[#6b7c93]" />
                  <div className="absolute -inset-y-px inset-x-[11px] bg-[#6b7c93]" />
                  <div className="relative flex items-center justify-center w-8 h-6 border border-black bg-[#0fa6e4]"><OfficeLogo className="w-[7px] h-[9px]" /></div>
                </div>
                图层 0
              </div>
            </div>
          </div>
          <div className="w-[15px] bg-linear-to-r from-[#383838] to-[#454545]" />
        </div>
        <div className="flex items-center gap-[13px] h-[19px] shrink-0 pl-[47px] border-t border-[#6a6a6a] text-[#d5d5d5]">
          <Icon name="chain" className="size-3.5 text-[#999]" />
          <button aria-label="图层样式" className="relative w-3.5 text-[14px] leading-4 italic font-bold font-['Liberation_Serif',serif]">
            fx
            <Caret className="absolute -right-1.5 bottom-0.5" />
          </button>
          <Icon name="mask" className="size-3.5" />
          <button aria-label="调整图层" className="relative">
            <Icon name="halfCircle" className="size-3.5" />
            <Caret className="absolute -right-1.5 bottom-0" />
          </button>
          <Icon name="folder" className="size-3.5" />
          <Icon name="newLayer" className="size-3.5" />
        </div>
      </section>
    </aside>
  );
}

function ContextMenu() {
  return (
    <div role="menu" className="absolute left-[908px] top-[508px] z-20 w-[174px] h-[560px] p-0.5 border border-[#ccc] bg-[#f2f2f2] text-black shadow-[3px_3px_4px_#0008]">
      {contextMenu.map((group, i) => (
        <div key={i}>
          {i > 0 && <div className="ml-7 my-[3px] h-px bg-[#d7d7d7]" />}
          {group.map(({ label, checked, active, disabled }) => (
            <button
              key={label}
              role="menuitem"
              className={clsx("flex w-full h-[22px] text-left leading-[22px]", active && "bg-[#91c9f7]", disabled && "text-[#777]")}
            >
              <span className={clsx("flex items-center justify-center mr-2.5 w-[22px] h-full", checked && "bg-[#91c9f7]")}>
                {checked && <svg viewBox="0 0 10 8" fill="none" stroke="#222" strokeWidth="1.300" className="w-2.5 h-2"><path d="M.5 4L3.500 7l6-6" /></svg>}
              </span>
              {label}
            </button>
          ))}
        </div>
      ))}
    </div>
  );
}

function Pointers() {
  return (
    <>
      <svg viewBox="0 0 60 356" className="absolute left-[877px] top-[600px] z-30 w-[60px] h-[356px] overflow-visible drop-shadow-[3px_3px_2px_#0008] pointer-events-none">
        <path d="M5 5L49 328" stroke="#f00" strokeWidth="3" strokeLinecap="round" />
        <path d="M55 351L45 325l5 3 7-4z" fill="#f00" stroke="#f00" />
      </svg>
      <svg viewBox="0 0 13 20" className="absolute left-[1061px] top-[946px] z-30 w-[13px] h-5 pointer-events-none">
        <path d="M.5.500v15.500l3.500-3.400 2.600 6.300 2.600-1.100-2.600-6.100h5.200z" fill="#fff" stroke="#223" />
      </svg>
    </>
  );
}

function Watermark() {
  return (
    <div className="absolute right-2 bottom-1.5 z-30 flex items-center opacity-85 pointer-events-none">
      <svg viewBox="0 0 46 42" className="w-[46px] h-[42px] overflow-visible">
        <defs>
          <linearGradient id="swirlBlue" x1="0" y1="1" x2="1" y2="0"><stop offset="0" stopColor="#1d4f9c" /><stop offset="1" stopColor="#1f9bc0" /></linearGradient>
          <linearGradient id="swirlGreen" x1="0" y1="1" x2="1" y2="0"><stop offset="0" stopColor="#e0c818" /><stop offset=".5" stopColor="#6fa52a" /><stop offset="1" stopColor="#1b8a43" /></linearGradient>
        </defs>
        <path d="M46 1C26-1 2 11 1 24c0 5 3 8 8 8 9 0 15-3 16-9-2-4-9-3-10 1 1 2 4 1 5-1-1 6-9 8-11 3C6 16 27 5 46 1z" fill="url(#swirlBlue)" />
        <path d="M26 17c8-3 17-1 16 6-1 9-18 16-36 16 14-4 27-9 28-14 0-3-3-5-8-8z" fill="url(#swirlGreen)" />
      </svg>
      <div className="flex flex-col">
        <span className="text-[21px] leading-5 font-bold text-[#205c9a]">极光下载站</span>
        <span className="text-[17px] leading-5 text-[#35ad5c] font-['Liberation_Sans',sans-serif]">www.xz7.com</span>
      </div>
    </div>
  );
}

export default function App() {
  return (
    <div className="relative flex flex-col h-screen overflow-hidden bg-[#535353] border-x border-[#2b2b2b] text-[12px] leading-4 font-['Noto_Sans','Noto_Sans_CJK_SC',sans-serif]">
      <MenuBar />
      <OptionsBar />
      <div className="flex-1 min-h-0 flex border-t border-[#2b2b2b]">
        <Toolbar />
        <DocumentArea />
        <IconDock />
        <Panels />
      </div>
      <ContextMenu />
      <Pointers />
      <div className="absolute right-0.5 bottom-0.5 z-20 flex items-center justify-center gap-1 w-[60px] h-[25px] rounded-[4px] bg-white text-[13px] text-[#222]">
        <span>CH</span>
        <svg viewBox="0 0 12 12" fill="none" stroke="#222" strokeWidth="1.300" className="size-3"><path d="M5 1c6 0 6 7 1 10 3-4 2-6-1-7zM2 9.500a1 1 0 1 0 1 1" /></svg>
        <span>简</span>
      </div>
      <Watermark />
    </div>
  );
}
